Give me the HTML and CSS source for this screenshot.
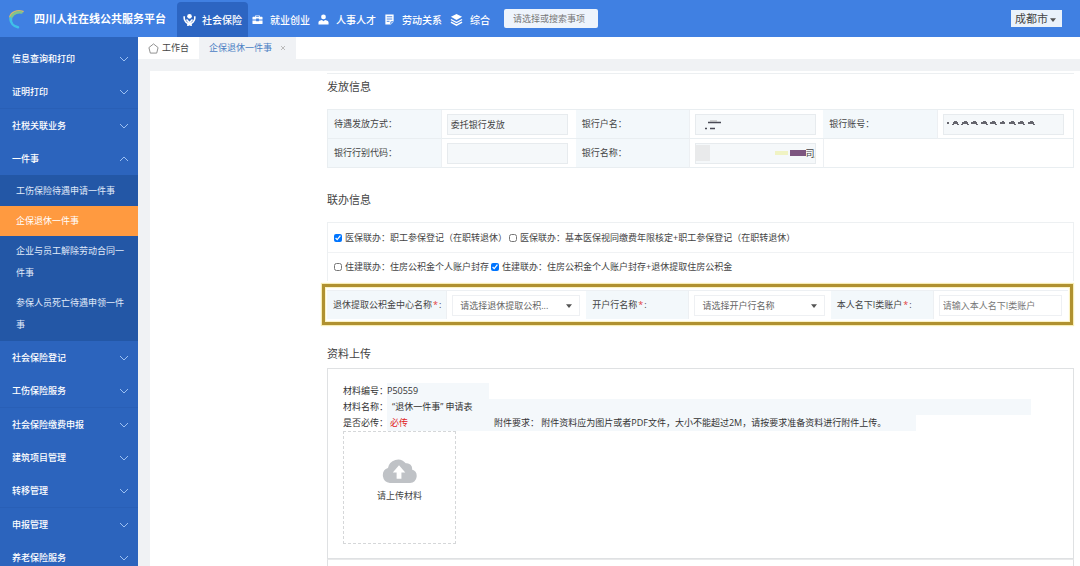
FILE: index.html
```html
<!DOCTYPE html>
<html lang="zh-CN">
<head>
<meta charset="utf-8">
<title>四川人社在线公共服务平台</title>
<link rel="stylesheet" href="styles.css">
</head>
<body>
<header class="topbar">
  <div class="brand">
    <svg class="logo" viewBox="0 0 20 20" fill="none" stroke-linecap="round">
      <path d="M15 2.500C9 .5 3 3 1.800 8" stroke="#d9b66a" stroke-width="1.500"/>
      <path d="M13.500 3.500C7 2.500 2.500 6.500 3 11.500" stroke="#7fc48c" stroke-width="2.500"/>
      <path d="M2.500 9.500C2.500 14 5.500 17.500 10 18.200" stroke="#3fc1e8" stroke-width="2.500"/>
    </svg>
    <h1 class="brand-name">四川人社在线公共服务平台</h1>
  </div>
  <nav class="topnav">
    <a class="topnav-link is-active" href="#">
      <svg class="nav-icon wide" viewBox="0 0 14 14"><circle cx="7" cy="3.600" r="2.500" fill="#fff"/><path d="M1.500 3.500c-.6 2.500 0 4.500 1.500 6l2.300 2V14M12.500 3.500c.6 2.500 0 4.500-1.500 6l-2.300 2V14M3.800 7l2.700 3v3.500M10.200 7l-2.700 3v3.500" fill="none" stroke="#fff" stroke-width="1.700"/></svg>
      社会保险</a>
    <a class="topnav-link" href="#">
      <svg class="nav-icon" viewBox="0 0 12 12" fill="#fff"><path d="M3.500 3V1.500h5V3h2.300c.4 0 .7.300.7.700V6H7.500V5h-3v1H.5V3.700c0-.4.3-.7.7-.7zM4.500 3h3v-.7h-3zM.5 7h4v1h3V7h4v3.300c0 .4-.3.700-.7.700H1.200c-.4 0-.7-.3-.7-.7z"/></svg>
      就业创业</a>
    <a class="topnav-link" href="#">
      <svg class="nav-icon" viewBox="0 0 12 12" fill="#fff"><circle cx="6" cy="3.200" r="2.600"/><path d="M.5 11.500V9c0-1 .8-1.700 3.800-2.500L6 8l1.700-1.500C10.700 7.300 11.500 8 11.500 9v2.500z"/></svg>
      人事人才</a>
    <a class="topnav-link" href="#">
      <svg class="nav-icon" viewBox="0 0 12 12"><path d="M1.500.5h9v8l-3 3h-6z" fill="#fff"/><path d="M3 3h6M3 5.500h6M3 8h3M7.500 11V8.500h3" stroke="#4080e2" fill="none"/></svg>
      劳动关系</a>
    <a class="topnav-link" href="#">
      <svg class="nav-icon wide" viewBox="0 0 14 14"><path d="M7 1l6 3-6 3.500L1 4z" fill="#fff"/><path d="M1 7l6 3.300L13 7M1 9.800l6 3.300 6-3.300" stroke="#fff" stroke-width="1.500" fill="none"/></svg>
      综合</a>
  </nav>
  <input class="search" type="text" placeholder="请选择或搜索事项" aria-label="搜索事项">
  <div class="city">
    <select class="city-select" aria-label="城市"><option>成都市</option></select>
    <svg class="caret" viewBox="0 0 8 5" fill="#555"><path d="M0 0h8L4 5z"/></svg>
  </div>
</header>

<div class="layout">
  <nav class="sidebar">
    <ul class="menu">
      <li><a class="menu-link" href="#">信息查询和打印<svg class="chevron" viewBox="0 0 10 6"><path d="M1 1l4 4 4-4"/></svg></a></li>
      <li><a class="menu-link" href="#">证明打印<svg class="chevron" viewBox="0 0 10 6"><path d="M1 1l4 4 4-4"/></svg></a></li>
      <li class="divided"><a class="menu-link" href="#">社税关联业务<svg class="chevron" viewBox="0 0 10 6"><path d="M1 1l4 4 4-4"/></svg></a></li>
      <li>
        <a class="menu-link" href="#">一件事<svg class="chevron" viewBox="0 0 10 6"><path d="M1 5l4-4 4 4"/></svg></a>
        <ul class="submenu">
          <li><a class="submenu-link" href="#">工伤保险待遇申请一件事</a></li>
          <li><a class="submenu-link is-current" href="#">企保退休一件事</a></li>
          <li><a class="submenu-link" href="#">企业与员工解除劳动合同一件事</a></li>
          <li><a class="submenu-link" href="#">参保人员死亡待遇申领一件事</a></li>
        </ul>
      </li>
      <li><a class="menu-link" href="#">社会保险登记<svg class="chevron" viewBox="0 0 10 6"><path d="M1 1l4 4 4-4"/></svg></a></li>
      <li><a class="menu-link" href="#">工伤保险服务<svg class="chevron" viewBox="0 0 10 6"><path d="M1 1l4 4 4-4"/></svg></a></li>
      <li class="divided"><a class="menu-link" href="#">社会保险缴费申报<svg class="chevron" viewBox="0 0 10 6"><path d="M1 1l4 4 4-4"/></svg></a></li>
      <li><a class="menu-link" href="#">建筑项目管理<svg class="chevron" viewBox="0 0 10 6"><path d="M1 1l4 4 4-4"/></svg></a></li>
      <li><a class="menu-link" href="#">转移管理<svg class="chevron" viewBox="0 0 10 6"><path d="M1 1l4 4 4-4"/></svg></a></li>
      <li class="divided"><a class="menu-link" href="#">申报管理<svg class="chevron" viewBox="0 0 10 6"><path d="M1 1l4 4 4-4"/></svg></a></li>
      <li><a class="menu-link" href="#">养老保险服务<svg class="chevron" viewBox="0 0 10 6"><path d="M1 1l4 4 4-4"/></svg></a></li>
    </ul>
  </nav>

  <div class="workspace">
    <div class="tabs">
      <a class="tab" href="#"><svg class="home" viewBox="0 0 12 12"><path d="M6 1L1 5l1.500 6h7L11 5z"/></svg>工作台</a>
      <div class="tab is-open"><a class="tab-link" href="#">企保退休一件事</a><button class="tab-close" type="button" aria-label="关闭"><svg viewBox="0 0 6 6"><path d="M1 1l4 4M5 1L1 5"/></svg></button></div>
    </div>

    <main class="page">
      <section>
        <h2 class="section-title">发放信息</h2>
        <div class="grid pay-grid">
          <label class="label" for="method">待遇发放方式：</label>
          <div class="cell"><input class="field locked" id="method" value="委托银行发放" readonly></div>
          <label class="label" for="holder">银行户名：</label>
          <div class="cell"><input class="field locked" id="holder" readonly>
            <svg class="mask mask-name" viewBox="0 0 18 10" stroke="#4a4a55"><path d="M3 2.500h13M0 8.500h2M5 8.500h5" stroke-width="1.500"/><path d="M5 1h7" stroke="#aaa"/></svg></div>
          <label class="label" for="account">银行账号：</label>
          <div class="cell"><input class="field locked" id="account" readonly>
            <svg class="mask mask-account" viewBox="0 0 90 6" fill="none" stroke="#66666e"><path d="M0 3h2M6 3h5M15 3h6M24 3h6M34 3h6M43 3h6M53 3h5M62 3h6M71 3h6M81 3h6" stroke-width="2"/><path d="M7 1.500h3M17 1.500h3M26 1.500h3M36 1.500h3M45 1.500h3M55 1.500h2M64 1.500h3M73 1.500h3M83 1.500h3M5 4.500h2M10 4.500h2M14 4.500h2M20 4.500h2M29 4.500h2M39 4.500h2M48 4.500h2M67 4.500h2M76 4.500h2M86 4.500h2"/></svg></div>
          <label class="label" for="code">银行行别代码：</label>
          <div class="cell"><input class="field locked" id="code" readonly></div>
          <label class="label" for="bank">银行名称：</label>
          <div class="cell"><input class="field locked bank-name" id="bank" value="司房" readonly>
            <svg class="mask mask-bank" viewBox="0 0 111 16"><path fill="#e9eaeb" d="M0 0h15v16H0z"/><path fill="#f0f3c4" d="M80 6h13v4H80z"/><path fill="#7d5680" d="M95 5h16v6H95z"/></svg></div>
          <div class="cell rest"></div>
        </div>
      </section>

      <section>
        <h2 class="section-title">联办信息</h2>
        <div class="choices">
          <div class="choice-row">
            <label class="choice"><input class="tick" type="checkbox" checked>医保联办：职工参保登记（在职转退休）</label>
            <label class="choice"><input class="tick" type="checkbox">医保联办：基本医保视同缴费年限核定+职工参保登记（在职转退休）</label>
          </div>
          <div class="choice-row">
            <label class="choice"><input class="tick" type="checkbox">住建联办：住房公积金个人账户封存</label>
            <label class="choice"><input class="tick" type="checkbox" checked>住建联办：住房公积金个人账户封存+退休提取住房公积金</label>
          </div>
        </div>
        <div class="highlight">
          <div class="fund-grid">
            <label class="label" for="center">退休提取公积金中心名称<span class="star">*</span>:</label>
            <div class="cell"><select class="field pick" id="center"><option>请选择退休提取公积...</option></select><svg class="caret pick-caret" viewBox="0 0 8 5" fill="#555"><path d="M0 0h8L4 5z"/></svg></div>
            <label class="label" for="branch">开户行名称<span class="star">*</span>:</label>
            <div class="cell"><select class="field pick" id="branch"><option>请选择开户行名称</option></select><svg class="caret pick-caret" viewBox="0 0 8 5" fill="#555"><path d="M0 0h8L4 5z"/></svg></div>
            <label class="label" for="card">本人名下I类账户<span class="star">*</span>:</label>
            <div class="cell"><input class="field" id="card" placeholder="请输入本人名下I类账户"></div>
          </div>
        </div>
      </section>

      <section class="uploads">
        <h2 class="section-title">资料上传</h2>
        <div class="material">
          <div class="info"><span class="key">材料编号：</span><span class="tint short">P50559</span></div>
          <div class="info"><span class="key">材料名称：</span><span class="tint long">“退休一件事” 申请表</span></div>
          <div class="info"><span class="key">是否必传：</span><span class="tint must">必传</span><span class="tint note">附件要求： 附件资料应为图片或者PDF文件，大小不能超过2M，请按要求准备资料进行附件上传。</span></div>
          <button class="upload" type="button">
            <svg class="cloud" viewBox="0 0 36 26"><path fill="#bfc2c6" d="M8 26a8 8 0 0 1-2-15.500A10.500 10.500 0 0 1 24.500 5.500 5.500 5.500 0 0 1 31 12 7.200 7.200 0 0 1 29 26z"/><path fill="#fff" d="M17.500 7.500L24 15h-4v6.500h-5V15h-4z"/></svg>
            请上传材料
          </button>
        </div>
        <div class="material"></div>
      </section>
    </main>
  </div>
</div>
</body>
</html>
```

FILE: styles.css
```css
* { box-sizing: border-box; }
body {
  margin: 0;
  height: 100vh;
  overflow: hidden;
  display: flex;
  flex-direction: column;
  font: 9px/16px "Open Sans", "Noto Sans CJK SC", sans-serif;
  color: #444;
  background: #f0f2f4;
}
a { color: inherit; text-decoration: none; }
ul { margin: 0; padding: 0; list-style: none; }
input, select, button { font: inherit; color: inherit; }
svg { flex: none; display: block; }

.topbar {
  flex: none;
  display: flex;
  align-items: center;
  height: 37px;
  padding: 0 18px 0 8px;
  background: #4080e2;
  color: #fff;
}
.brand { display: flex; align-items: center; gap: 6px; width: 169px; }
.logo { width: 20px; height: 20px; }
.brand-name { margin: 0; font-size: 11px; font-weight: 700; white-space: nowrap; }
.topnav { display: flex; align-self: stretch; padding-top: 2px; }
.topnav-link {
  display: flex;
  align-items: center;
  gap: 7px;
  padding: 0 4px;
  font-size: 10px;
  font-weight: 500;
  white-space: nowrap;
}
.topnav-link.is-active { padding: 0 6px; gap: 6px; background: #2c65c2; border-radius: 4px 4px 0 0; }
.nav-icon { width: 11px; height: 11px; }
.nav-icon.wide { width: 13px; height: 13px; }
.search {
  width: 94px;
  height: 19px;
  margin-left: 10px;
  padding: 0 9px;
  border: 0;
  border-radius: 2px;
  background: #eef4fc;
}
.search::placeholder { color: #777; opacity: 1; }
.city { position: relative; margin-left: auto; }
.city-select {
  appearance: none;
  display: block;
  width: 51px;
  height: 17px;
  padding: 0 4px;
  border: 0;
  border-radius: 0;
  background: #eaf2fb;
  color: #444;
  font-size: 11px;
}
.caret { position: absolute; width: 6px; height: 4px; pointer-events: none; }
.city .caret { right: 6px; top: 8px; }

.layout { flex: 1; display: flex; min-height: 0; }
.sidebar { flex: none; width: 138px; padding-top: 5px; background: #2c64bd; color: #fff; overflow: hidden; }
.menu-link {
  display: flex;
  align-items: center;
  justify-content: space-between;
  height: 33px;
  padding: 0 9px 0 12px;
  font-weight: 500;
}
.divided { border-top: 1px solid #295fb6; }
.chevron { width: 10px; height: 6px; fill: none; stroke: #9cc0f2; }
.submenu { padding: 1px 0; background: #2357a6; color: #e0ebfa; }
.submenu-link { display: block; padding: 4px 8px 4px 16px; line-height: 22px; }
.submenu-link.is-current { background: #ff9a40; color: #fff; }

.workspace { flex: 1; min-width: 0; display: flex; flex-direction: column; }
.tabs { flex: none; display: flex; height: 22px; background: #fff; }
.tab { display: flex; align-items: center; gap: 3px; padding: 0 10px; }
.tab.is-open { gap: 8px; background: #f0f2f5; color: #4b80c4; }
.home { width: 11px; height: 11px; fill: none; stroke: #888; }
.tab-close { width: 6px; height: 6px; padding: 0; border: 0; background: none; }
.tab-close svg { width: 6px; height: 6px; stroke: #bbb; }

.page { flex: 1; margin: 12px 0 0 12px; padding: 2px 6px 0 177px; background: #fff; overflow: hidden; }
.section-title {
  margin: 0;
  padding: 5px 0 14px;
  border-top: 1px solid transparent;
  font-size: 11px;
  font-weight: 400;
  line-height: 16px;
}
section:first-child .section-title { border-top-color: #eceff1; }
section + section { padding-top: 18px; }
.grid { display: grid; border: 1px solid #e9eef1; border-width: 1px 1px 0 1px; }
.pay-grid { grid-template-columns: 113fr 135fr 113fr 135fr 114fr 136fr; }
.pay-grid > * { border-bottom: 1px solid #e9eef1; }
.label {
  display: flex;
  align-items: center;
  padding-left: 6px;
  background: #f3f8fb;
  white-space: nowrap;
}
.cell { position: relative; padding: 4px 6px 3px 5px; border-left: 1px solid #edf0f3; }
.rest { grid-column: span 2; }
.field {
  display: block;
  width: 100%;
  height: 21px;
  padding: 0 3px;
  border: 1px solid #eef0f3;
  border-radius: 0;
  background: #fff;
}
.field.locked { max-width: 121px; background: #f5f8fa; border-color: #e7ebee; }
.field.bank-name { padding: 0 0 0 110px; }
.mask { position: absolute; }
.mask-name { left: 15px; top: 10px; width: 18px; height: 10px; }
.mask-account { left: 9px; top: 10px; width: 90px; height: 6px; }
.mask-bank { left: 5px; top: 6px; width: 111px; height: 16px; }

.choices { border: 1px solid #edf0f2; border-bottom: 0; }
.choice-row { display: flex; gap: 2px; height: 29px; align-items: center; padding-left: 6px; }
.choice-row + .choice-row { border-top: 1px solid #f0f2f4; }
.choice { display: flex; align-items: center; gap: 3px; white-space: nowrap; }
.tick { width: 8px; height: 8px; margin: 0; }
.highlight {
  margin: 3px 1px 0 -5px;
  padding: 3px 2px;
  border: 3px solid #b09130;
  box-shadow: 0 0 1px 1px #f7edb5, inset 0 0 1px 1px #fbf2c0;
}
.fund-grid { display: grid; grid-template-columns: 119fr 140fr 102fr 142fr 102fr 135fr; border-top: 1px solid #edf0f3; }
.star { color: #e23c3c; padding: 0 1px; }
.pick { appearance: none; padding: 0 7px; color: #666; }
.field::placeholder { color: #777; opacity: 1; }
.pick-caret { right: 14px; top: 13px; }

section.uploads { padding-top: 15px; }
.uploads .section-title { padding-bottom: 6px; }
.material { min-height: 191px; padding: 14px 15px; border: 1px solid #dfe1e3; }
.material + .material { border-top-color: #e8e9ea; }
.info { display: flex; white-space: nowrap; color: #333; }
.key { flex: none; width: 44px; }
.tint { background: #f4f8fb; }
.tint.short { width: 102px; }
.tint.long { width: 644px; padding-left: 5px; }
.tint.must { width: 107px; padding-left: 3px; color: #e02020; }
.tint.note { width: 422px; }
.upload {
  display: flex;
  flex-direction: column;
  align-items: center;
  gap: 5px;
  width: 113px;
  height: 113px;
  padding: 26px 0 0;
  border: 1px dashed #d5d7d9;
  background: #fff;
}
.cloud { width: 35px; height: 25px; }
```
